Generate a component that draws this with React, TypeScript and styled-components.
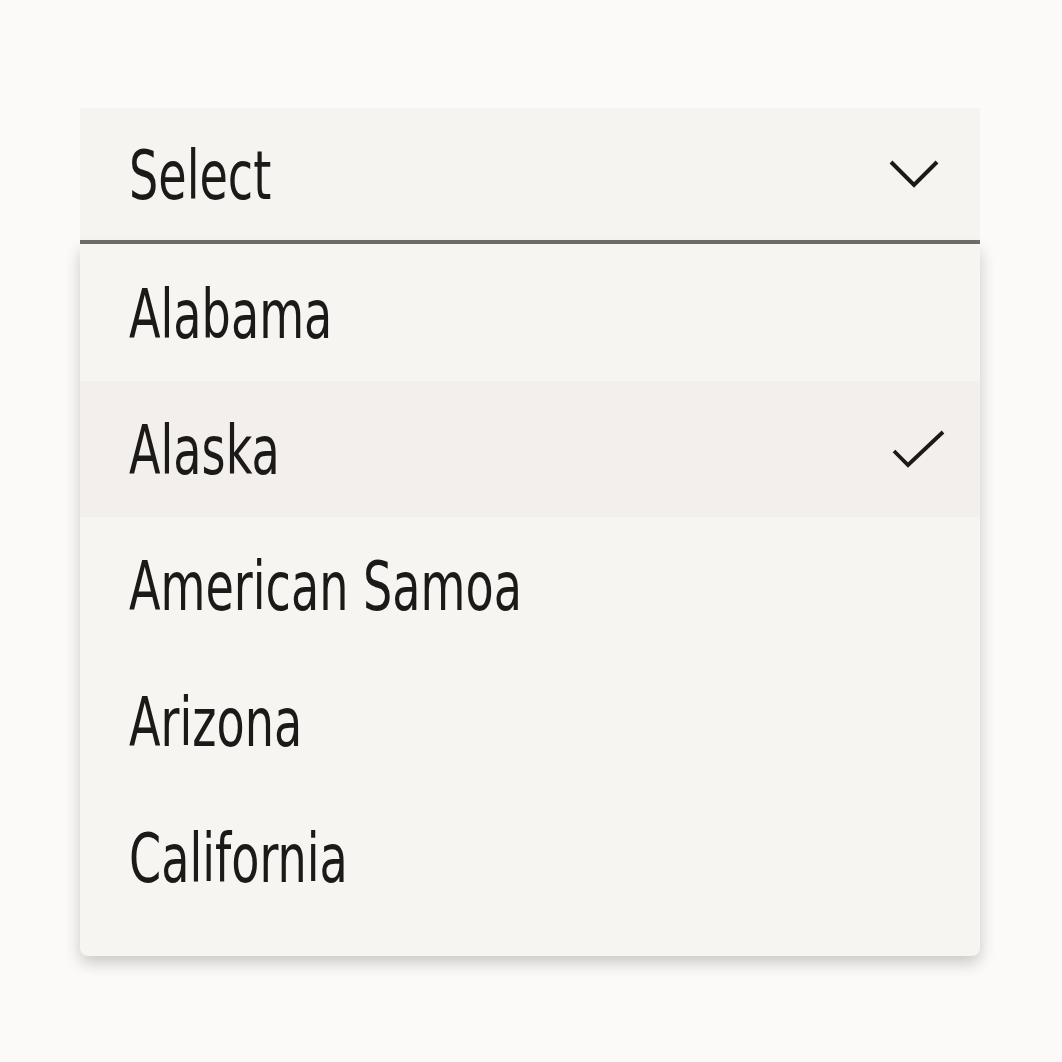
import React, { useState } from 'react';
import styled, { createGlobalStyle } from 'styled-components';

const GlobalStyle = createGlobalStyle`
    html, body {
        margin: 0;
        padding: 0;
        background: #fbfaf8;
    }
    body {
        font-family: "DejaVu Sans Condensed", "DejaVu Sans", "Liberation Sans", sans-serif;
        color: #1c1a18;
    }
`;

const states = ['Alabama', 'Alaska', 'American Samoa', 'Arizona', 'California'];

export default function App() {
    const [selected, setSelected] = useState<string>('Alaska');

    return (<Page>
        <GlobalStyle />
        <Dropdown>
            <Trigger>
                <Label>Select</Label>
                <svg width="56" height="34" viewBox="0 0 56 34">
                    <path d="M5 5 L28 28 L51 5" fill="none" stroke="#1c1a18" strokeWidth="4" />
                </svg>
            </Trigger>
            <Menu>
                { states.map((s) => <Option key={s} active={s === selected} onClick={() => setSelected(s)}>
                    <Label>{ s }</Label>
                    { s === selected && <svg width="60" height="44" viewBox="0 0 60 44">
                        <path d="M4 24 L18 38 L53 5" fill="none" stroke="#1c1a18" strokeWidth="3.8" />
                    </svg> }
                </Option>)}
            </Menu>
        </Dropdown>
    </Page>);
}

const Page = styled.div`
    min-height: 1062px;
    padding: 108px 82px 0 80px;
    box-sizing: border-box;
`;

const Dropdown = styled.div`
    width: 900px;
    display: flex;
    flex-direction: column;
`;

const Trigger = styled.div`
    height: 132px;
    background: #f5f4f1;
    border-bottom: 4px solid #6f6e6a;
    display: flex;
    align-items: center;
    justify-content: space-between;
    padding: 0 38px 0 49px;
`;

const Label = styled.span`
    display: inline-block;
    font-size: 67px;
    line-height: 1;
    margin-top: 4px;
    white-space: nowrap;
    transform: scaleX(0.765);
    transform-origin: left center;
`;

const Menu = styled.div`
    background: #f6f5f2;
    border-radius: 0 0 8px 8px;
    box-shadow: 0 7px 16px rgba(0, 0, 0, 0.2);
    padding: 1px 0 31px;
    display: flex;
    flex-direction: column;
`;

const Option = styled.div<{ active: boolean }>`
    height: 136px;
    display: flex;
    align-items: center;
    justify-content: space-between;
    padding: 0 30px 0 49px;
    background: ${props => props.active ? '#f2efec' : 'transparent'};
    cursor: pointer;
`;
